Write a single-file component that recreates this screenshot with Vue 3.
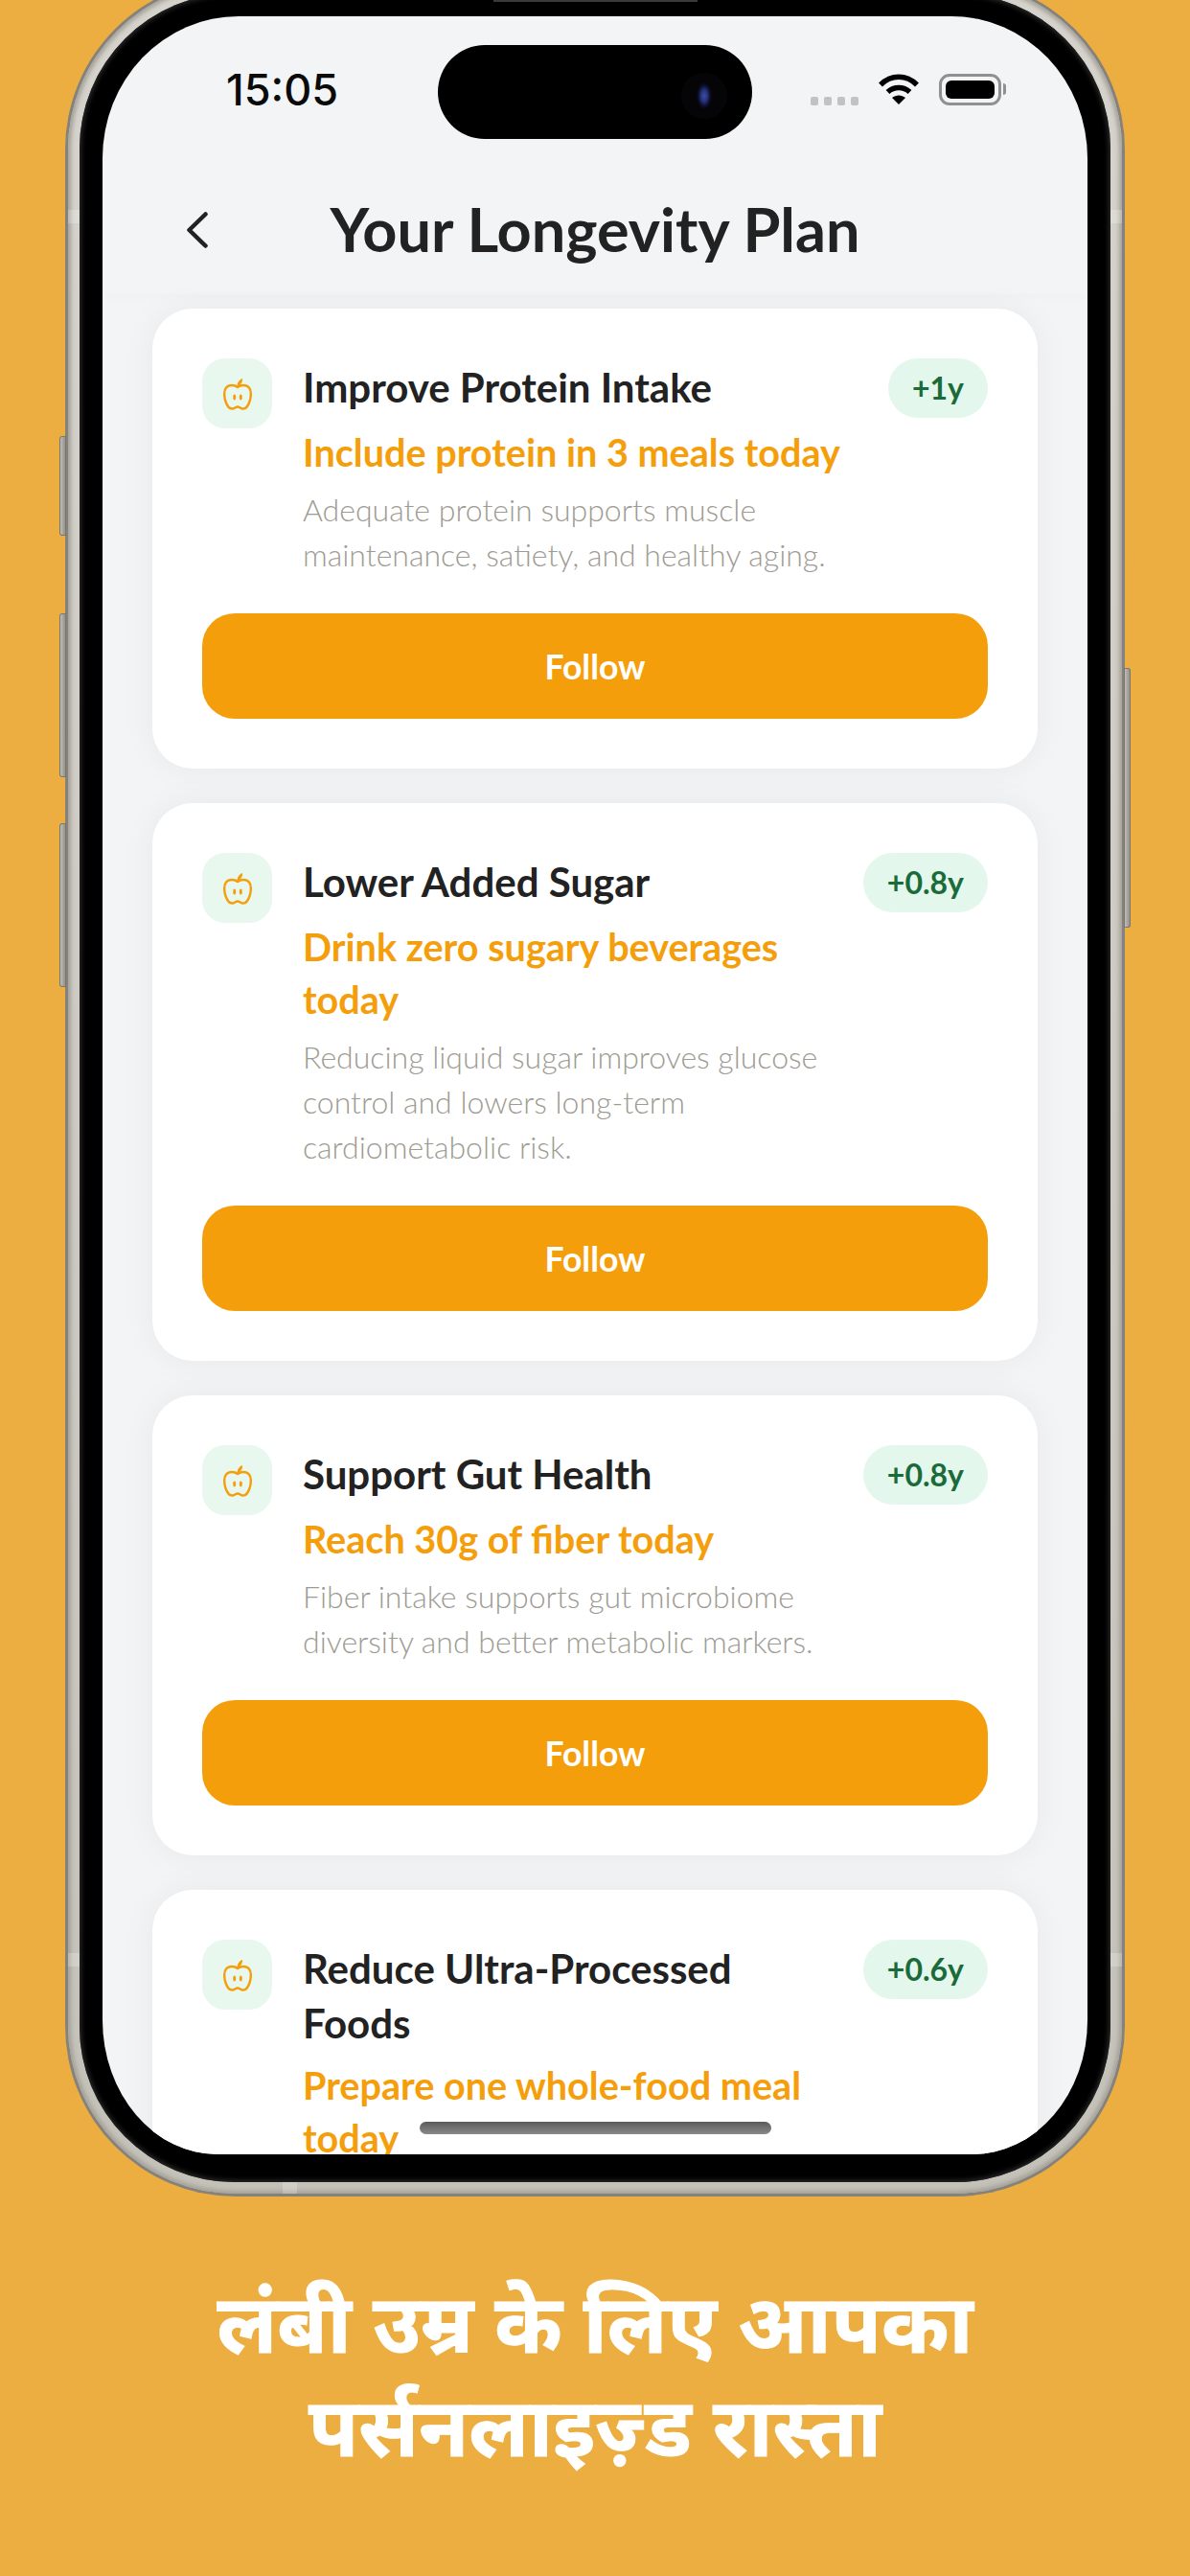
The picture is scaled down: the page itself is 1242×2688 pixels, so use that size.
<script setup>
const plans = [
  { title: ['Improve Protein Intake'], action: ['Include protein in 3 meals today'], why: ['Adequate protein supports muscle', 'maintenance, satiety, and healthy aging.'], gain: '+1y' },
  { title: ['Lower Added Sugar'], action: ['Drink zero sugary beverages', 'today'], why: ['Reducing liquid sugar improves glucose', 'control and lowers long-term', 'cardiometabolic risk.'], gain: '+0.8y' },
  { title: ['Support Gut Health'], action: ['Reach 30g of fiber today'], why: ['Fiber intake supports gut microbiome', 'diversity and better metabolic markers.'], gain: '+0.8y' },
  { title: ['Reduce Ultra-Processed', 'Foods'], action: ['Prepare one whole-food meal', 'today'], why: [], gain: '+0.6y' },
]
</script>

<template>
  <div class="page">
    <div class="phone-wrap">
      <span class="side side-l b1"></span>
      <span class="side side-l b2"></span>
      <span class="side side-l b3"></span>
      <span class="side side-r"></span>
      <div class="phone">
        <div class="rim">
          <div class="bezel">
            <div class="screen">
              <div class="status">
                <span class="time">15:05</span>
                <div class="island"><span class="lens"></span></div>
                <div class="status-icons">
                  <span class="signal"><i></i><i></i><i></i><i></i></span>
                  <svg class="wifi" viewBox="0 0 44 32" width="44" height="32">
                    <path d="M3 11.5C14 .5 30 .5 41 11.5" fill="none" stroke="#000" stroke-width="5.5" />
                    <path d="M10.5 19C17 13 27 13 33.5 19" fill="none" stroke="#000" stroke-width="5.5" />
                    <path d="M22 32L15 25C19 21.5 25 21.5 29 25Z" fill="#000" />
                  </svg>
                  <span class="battery"><span class="cell"></span></span>
                  <span class="nub"></span>
                </div>
              </div>
              <header class="head">
                <svg class="back" viewBox="0 0 22 38" width="22" height="38">
                  <path d="M19.5 2.5L2.5 19L19.5 35.5" fill="none" stroke="#222" stroke-width="4.5" stroke-linecap="round" stroke-linejoin="round" />
                </svg>
                <h1 class="head-title">Your Longevity Plan</h1>
              </header>
              <div class="list">
                <article v-for="p in plans" :key="p.action[0]" class="card">
                  <div class="card-top">
                    <div class="icon">
                      <svg viewBox="0 0 30 34" width="30" height="34">
                        <path d="M15 10C12 7.5 6 7 3 10.5C.5 13.5.8 20 2.5 25C4 29.5 6.5 33 10 32.5C12 32.2 13 30.5 15 30.5C17 30.5 18 32.2 20 32.5C23.5 33 26 29.5 27.5 25C29.2 20 29.5 13.5 27 10.5C24 7 18 7.5 15 10Z" fill="none" stroke="#F59E0B" stroke-width="2.4" stroke-linejoin="round" />
                        <path d="M14.5 9C14.5 5 17 2 20 1C20.5 5 18 8 14.5 9Z" fill="#F59E0B" />
                        <ellipse cx="11.7" cy="20.5" rx="1.5" ry="3" fill="#F59E0B" />
                        <ellipse cx="18.3" cy="20.5" rx="1.5" ry="3" fill="#F59E0B" />
                      </svg>
                    </div>
                    <div class="copy">
                      <div class="title-row">
                        <h2 class="card-title"><span v-for="l in p.title" :key="l" class="line">{{ l }}</span></h2>
                        <span class="gain">{{ p.gain }}</span>
                      </div>
                      <p class="action"><span v-for="l in p.action" :key="l" class="line">{{ l }}</span></p>
                      <p v-if="p.why.length" class="why"><span v-for="l in p.why" :key="l" class="line">{{ l }}</span></p>
                    </div>
                  </div>
                  <button v-if="p.why.length" class="follow">Follow</button>
                </article>
              </div>
              <span class="home"></span>
            </div>
          </div>
        </div>
      </div>
      <span class="band band-l1"></span>
      <span class="band band-r1"></span>
      <span class="band band-l2"></span>
      <span class="band band-r2"></span>
      <span class="band band-b"></span>
      <span class="top-btn"></span>
    </div>
    <p class="caption"><span class="line">लंबी उम्र के लिए आपका</span><span class="line">पर्सनलाइज़्ड रास्ता</span></p>
  </div>
</template>

<style>
html, body { margin: 0; padding: 0; background: #EDAE41; }
</style>

<style scoped>
.page {
  width: 1242px;
  height: 2688px;
  overflow: hidden;
  background: #EDAE41;
  font-family: "Lato", "Noto Sans", sans-serif;
}
.phone-wrap {
  position: relative;
  width: 1106px;
  height: 2314px;
  margin: -22px 0 0 68px;
}
.phone {
  height: 100%;
  box-sizing: border-box;
  padding: 3px;
  border-radius: 178px;
  background: #85827b;
}
.rim {
  height: 100%;
  box-sizing: border-box;
  padding: 12px;
  border-radius: 175px;
  background: linear-gradient(#d6d3cc, #c4c1b9);
  box-shadow: inset 0 0 4px 3px #a5a29a;
}
.bezel {
  height: 100%;
  box-sizing: border-box;
  padding: 24px 24px 29px;
  border-radius: 162px;
  background: #000;
  box-shadow: inset 0 0 5px 2px #2a2a2a;
}
.screen {
  position: relative;
  height: 100%;
  overflow: hidden;
  background: #F3F4F6;
  border-radius: 142px 142px 120px 120px / 148px 148px 140px 140px;
}
.status {
  display: flex;
  justify-content: space-between;
  align-items: flex-start;
  height: 168px;
  box-sizing: border-box;
  padding: 60px 85px 0 129px;
}
.time {
  font-family: "Inter", sans-serif;
  font-weight: 500;
  font-size: 45px;
  line-height: 34px;
  color: #0a0a0a;
}
.island {
  position: absolute;
  left: 350px;
  top: 30px;
  width: 328px;
  height: 98px;
  border-radius: 49px;
  background: #000;
}
.lens {
  position: absolute;
  left: 254px;
  top: 29px;
  width: 48px;
  height: 48px;
  border-radius: 50%;
  background: radial-gradient(ellipse 8px 14px at 50% 50%, #3b4fa8 0, #27317a 45%, #0d1030 75%, #050508 100%);
}
.status-icons {
  display: flex;
  align-items: flex-start;
  position: relative;
}
.signal {
  display: flex;
  gap: 6px;
  margin: 24px 20px 0 0;
}
.signal i {
  width: 8px;
  height: 9px;
  border-radius: 2px;
  background: #c2c2c2;
}
.wifi {
  display: block;
  margin-right: 20px;
}
.battery {
  box-sizing: border-box;
  width: 65px;
  height: 33px;
  padding: 4px;
  border: 3px solid #909090;
  border-radius: 11px;
}
.cell {
  display: block;
  height: 100%;
  border-radius: 6px;
  background: #000;
}
.nub {
  width: 3px;
  height: 12px;
  margin: 10px 0 0 2px;
  border-radius: 0 3px 3px 0;
  background: #909090;
}
.head {
  position: relative;
  display: flex;
  justify-content: center;
  align-items: center;
  height: 123px;
  margin-top: -1px;
  box-shadow: 0 6px 10px rgba(0, 0, 0, 0.012);
}
.back {
  position: absolute;
  left: 88px;
  top: 37px;
}
.head-title {
  margin: 0 0 14px;
  font-size: 63px;
  font-weight: 700;
  line-height: 70px;
  color: #222;
}
.list {
  display: flex;
  flex-direction: column;
  gap: 36px;
  padding: 15px 52px 0;
}
.card {
  flex: none;
  padding: 52px;
  border-radius: 42px;
  background: #fff;
  box-shadow: 0 0 36px rgba(0, 0, 0, 0.05);
}
.card-top {
  display: flex;
  gap: 32px;
}
.icon {
  flex: none;
  display: flex;
  align-items: center;
  justify-content: center;
  width: 73px;
  height: 73px;
  border-radius: 24px;
  background: #E8F8EE;
}
.copy {
  flex: 1;
  min-width: 0;
}
.title-row {
  display: flex;
  justify-content: space-between;
  align-items: flex-start;
}
.line {
  display: block;
  white-space: nowrap;
}
.card-title {
  margin: 1.5px 0 0;
  font-size: 42px;
  font-weight: 700;
  line-height: 57px;
  color: #222;
}
.gain {
  flex: none;
  padding: 0 25px;
  height: 62px;
  border-radius: 31px;
  background: #E4F7EC;
  font-size: 32px;
  font-weight: 700;
  line-height: 62px;
  color: #1B6B3A;
}
.action {
  margin: 8px 0 0;
  font-size: 39.6px;
  font-weight: 700;
  line-height: 55px;
  color: #F59E0B;
}
.why {
  margin: 9px 0 0;
  font-size: 32px;
  font-weight: 300;
  line-height: 47px;
  color: #9E9B92;
}
.follow {
  display: block;
  width: 100%;
  height: 110px;
  margin-top: 38px;
  border: 0;
  border-radius: 34px;
  background: #F59E0B;
  font-family: inherit;
  font-size: 35.5px;
  font-weight: 700;
  color: #fff;
}
.home {
  position: absolute;
  left: 331px;
  top: 2197px;
  width: 367px;
  height: 13px;
  border-radius: 7px;
  background: linear-gradient(#5a5a5a, #8a8a8a);
}
.side {
  position: absolute;
  width: 7px;
  box-sizing: border-box;
  background: linear-gradient(90deg, #c9c6bf, #8c8983);
  border-radius: 3px 0 0 3px;
  box-shadow: inset 0 0 0 1px #7a7770;
}
.side-l { left: -6px; }
.b1 { top: 477px; height: 104px; }
.b2 { top: 662px; height: 171px; }
.b3 { top: 881px; height: 171px; }
.side-r {
  left: 1105px;
  top: 719px;
  height: 271px;
  border-radius: 0 3px 3px 0;
}
.band {
  position: absolute;
  background: rgba(255, 255, 255, 0.22);
}
.band-l1 { left: 3px; top: 241px; width: 12px; height: 14px; }
.band-r1 { left: 1091px; top: 241px; width: 12px; height: 14px; }
.band-l2 { left: 3px; top: 2060px; width: 12px; height: 14px; }
.band-r2 { left: 1091px; top: 2060px; width: 12px; height: 14px; }
.band-b { left: 227px; top: 2299px; width: 15px; height: 12px; }
.top-btn {
  position: absolute;
  left: 447px;
  top: 21px;
  width: 213px;
  height: 3px;
  background: #3a3a3a;
}
.caption {
  margin: 76px 0 0;
  text-align: center;
  font-family: "Noto Sans", "Noto Sans Devanagari", "Lato", sans-serif;
  font-size: 85px;
  font-weight: 700;
  line-height: 108px;
  color: #fff;
  -webkit-text-stroke: 1px #fff;
}
</style>
